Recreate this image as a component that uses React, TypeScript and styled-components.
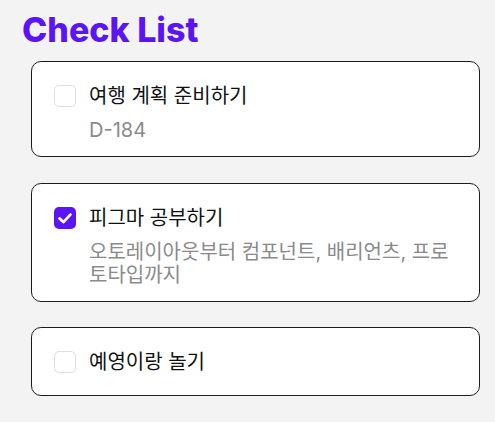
import styled, { createGlobalStyle } from "styled-components";

type Task = {
    id: number;
    title: string;
    note?: string;
    done: boolean;
};

const tasks: Task[] = [
    { id: 1, title: "여행 계획 준비하기", note: "D-184", done: false },
    { id: 2, title: "피그마 공부하기", note: "오토레이아웃부터 컴포넌트, 배리언츠, 프로토타입까지", done: true },
    { id: 3, title: "예영이랑 놀기", done: false },
];

export default function App() {
    return (
        <>
            <GlobalStyle />
            <Page>
                <Title>Check List</Title>
                <List>
                    {tasks.map((task) => (
                        <Card key={task.id} $hasNote={!!task.note}>
                            <Row>
                                <CheckBox $checked={task.done}>
                                    {task.done && (
                                        <svg width="22" height="22" viewBox="0 0 22 22" fill="none">
                                            <path
                                                d="M5.6 11.4L9.4 15.1L16.4 7.6"
                                                stroke="#fff"
                                                strokeWidth="2.8"
                                                strokeLinecap="round"
                                                strokeLinejoin="round"
                                            />
                                        </svg>
                                    )}
                                </CheckBox>
                                <TaskTitle>{task.title}</TaskTitle>
                            </Row>
                            {task.note && <Note>{task.note}</Note>}
                        </Card>
                    ))}
                </List>
            </Page>
        </>
    );
}

const GlobalStyle = createGlobalStyle`
    body {
        margin: 0;
        background: #f3f3f3;
        font-family: "Inter", "Noto Sans CJK KR", sans-serif;
    }
`

const Page = styled.div`
    padding: 10px 15px 20px 22px;
`

const Title = styled.h1`
    margin: 0;
    font-size: 34px;
    font-weight: 800;
    line-height: 40px;
    color: #5b14f5;
`

const List = styled.div`
    display: flex;
    flex-direction: column;
    gap: 25.5px;
    margin: 11px 0 0 9px;
`

const Card = styled.div<{ $hasNote: boolean }>`
    display: flex;
    flex-direction: column;
    gap: 11px;
    padding: 22px 22px ${({ $hasNote }) => ($hasNote ? "14px" : "21px")};
    background: #fff;
    border: 1.5px solid #1c1c1c;
    border-radius: 10px;
`

const Row = styled.div`
    display: flex;
    align-items: center;
    gap: 13px;
`

const CheckBox = styled.div<{ $checked: boolean }>`
    position: relative;
    box-sizing: border-box;
    width: 22px;
    height: 22px;
    flex-shrink: 0;
    border-radius: 5px;
    background: ${({ $checked }) => ($checked ? "#5b14f5" : "#fff")};
    border: ${({ $checked }) => ($checked ? "none" : "1.5px solid #dedede")};

    svg {
        display: block;
    }
`

const TaskTitle = styled.p`
    margin: 0;
    font-size: 20px;
    line-height: 24px;
    color: #111;
`

const Note = styled.p`
    margin: 0 0 0 35px;
    font-size: 20px;
    line-height: 23px;
    color: #8a8a8a;
`
